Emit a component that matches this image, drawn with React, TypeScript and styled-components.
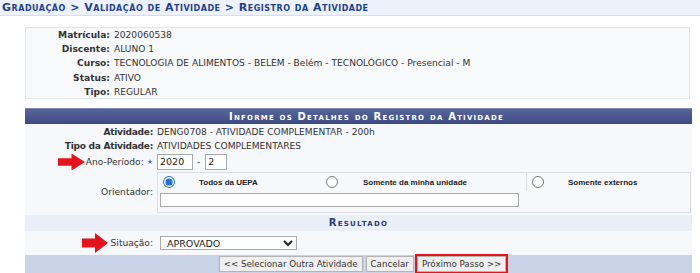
import styled, { createGlobalStyle } from "styled-components";

const GlobalStyle = createGlobalStyle`
  body {
    margin: 0;
    background: #ffffff;
    font-family: "DejaVu Sans", Verdana, sans-serif;
    font-size: 9.1px;
    color: #333;
  }
  * { box-sizing: border-box; }
`;

const Arrow = ({ width, height }: { width: number; height: number }) => (
  <svg width={width} height={height} viewBox="0 0 28 18" preserveAspectRatio="none">
    <path d="M0 5 H14 V0 L28 9 L14 18 V13 H0 Z" fill="#e3141c" />
  </svg>
);

const App = () => {
  return (
    <>
      <GlobalStyle />
      <Breadcrumb>Graduação &gt; Validação de Atividade &gt; Registro da Atividade</Breadcrumb>
      <Page>
        <InfoBox>
          <InfoLabel>Matrícula:</InfoLabel>
          <InfoValue>2020060538</InfoValue>
          <InfoLabel>Discente:</InfoLabel>
          <InfoValue>ALUNO 1</InfoValue>
          <InfoLabel>Curso:</InfoLabel>
          <InfoValue>TECNOLOGIA DE ALIMENTOS - BELEM - Belém - TECNOLÓGICO - Presencial - M</InfoValue>
          <InfoLabel>Status:</InfoLabel>
          <InfoValue>ATIVO</InfoValue>
          <InfoLabel>Tipo:</InfoLabel>
          <InfoValue>REGULAR</InfoValue>
        </InfoBox>

        <FormTable>
          <Caption>Informe os Detalhes do Registro da Atividade</Caption>
          <FormBody>
            <Label $bold $h={14}>Atividade:</Label>
            <Value>DENG0708 - ATIVIDADE COMPLEMENTAR - 200h</Value>
            <Label $bold $h={14}>Tipo da Atividade:</Label>
            <Value>ATIVIDADES COMPLEMENTARES</Value>
            <Label $h={17}>
              <ArrowSlot $left={33}>
                <Arrow width={27} height={17} />
              </ArrowSlot>
              Ano-Período:<Star>★</Star>
            </Label>
            <Value>
              <TextInput $width={36} defaultValue="2020" />
              <Dash>-</Dash>
              <TextInput $width={22} defaultValue="2" />
            </Value>
            <Label>Orientador:</Label>
            <OrientadorBox>
              <OptionRow>
                <Option $width={163}>
                  <Radio type="radio" name="orient" defaultChecked />
                  <OptionText $gap={24}>Todos da UEPA</OptionText>
                </Option>
                <Option $width={205}>
                  <Radio type="radio" name="orient" />
                  <OptionText $gap={25}>Somente da minha unidade</OptionText>
                </Option>
                <Option $width={164} $divider>
                  <Radio type="radio" name="orient" />
                  <OptionText $gap={24}>Somente externos</OptionText>
                </Option>
              </OptionRow>
              <SearchInput />
            </OrientadorBox>
          </FormBody>
          <SubCaption>Resultado</SubCaption>
          <ResultBody>
            <Label $h={24}>
              <ArrowSlot $left={57}>
                <Arrow width={26} height={20} />
              </ArrowSlot>
              Situação:
            </Label>
            <Value $indent>
              <Select defaultValue="APROVADO">
                <option>APROVADO</option>
                <option>REPROVADO</option>
              </Select>
            </Value>
          </ResultBody>
          <Footer>
            <Button>&lt;&lt; Selecionar Outra Atividade</Button>
            <Button>Cancelar</Button>
            <Button $highlight>Próximo Passo &gt;&gt;</Button>
          </Footer>
        </FormTable>
      </Page>
    </>
  );
};

const Breadcrumb = styled.h2`
  margin: 0;
  height: 16px;
  padding: 1px 0 0 2px;
  background: #edf1f9;
  border-bottom: 1px solid #d5def0;
  color: #1f3f8f;
  font-size: 11px;
  font-weight: bold;
  font-variant: small-caps;
  letter-spacing: 0.5px;
  line-height: 13px;
`;

const Page = styled.div`
  padding: 11px 8px 0 25px;
`;

const InfoBox = styled.div`
  display: grid;
  grid-template-columns: 84px 1fr;
  column-gap: 4px;
  width: 665px;
  height: 72px;
  background: #f8f9fb;
  border: 1px solid #e2e4ea;
  line-height: 14.2px;
`;

const InfoLabel = styled.div`
  text-align: right;
  font-weight: bold;
  color: #333;
`;

const InfoValue = styled.div`
  color: #333;
`;

const FormTable = styled.div`
  margin-top: 9px;
  width: 667px;
  background: #f7f8fb;
`;

const Caption = styled.div`
  height: 16px;
  padding-left: 16px;
  background: linear-gradient(#58659c, #3e4b81);
  border-top: 1px solid #7c87b0;
  color: #ffffff;
  text-align: center;
  font-weight: bold;
  font-variant: small-caps;
  letter-spacing: 1.2px;
  font-size: 10px;
  line-height: 15px;
`;

const FormBody = styled.div`
  display: grid;
  grid-template-columns: 128px 1fr;
  column-gap: 4px;
  align-items: center;
  padding: 1px 0 1px;
`;

const ResultBody = styled(FormBody)`
  padding: 0;
`;

const Label = styled.div<{ $bold?: boolean; $h?: number }>`
  position: relative;
  display: flex;
  align-items: center;
  justify-content: flex-end;
  height: ${(p) => (p.$h ? `${p.$h}px` : "auto")};
  font-weight: ${(p) => (p.$bold ? "bold" : "normal")};
  letter-spacing: ${(p) => (p.$bold ? "-0.3px" : "0")};
  color: #333;
  white-space: nowrap;
`;

const ArrowSlot = styled.span<{ $left: number }>`
  position: absolute;
  left: ${(p) => p.$left}px;
  top: 50%;
  transform: translateY(-50%);
  line-height: 0;
`;

const Star = styled.span`
  color: #4a74c9;
  font-size: 7px;
  margin-left: 3px;
`;

const Value = styled.div<{ $indent?: boolean }>`
  display: flex;
  align-items: center;
  padding-left: ${(p) => (p.$indent ? "3px" : "0")};
  color: #333;
`;

const TextInput = styled.input<{ $width: number }>`
  width: ${(p) => p.$width}px;
  height: 16px;
  padding: 0 2px;
  border: 1px solid #a9a9a9;
  background: #fff;
  font-family: "DejaVu Sans", Verdana, sans-serif;
  font-size: 9.5px;
  color: #222;
`;

const Dash = styled.span`
  margin: 0 5px 0 4px;
`;

const OrientadorBox = styled.div`
  height: 41px;
  margin: 2px 2px 1px 0;
  border: 1px solid #dcdde2;
  padding: 0 0 0 2px;
`;

const OptionRow = styled.div`
  display: flex;
  height: 18px;
  align-items: center;
  margin-left: -2px;
`;

const Option = styled.div<{ $width: number; $divider?: boolean }>`
  display: flex;
  align-items: center;
  width: ${(p) => p.$width}px;
  height: 100%;
  padding-left: 5px;
  border-left: ${(p) => (p.$divider ? "1px solid #dcdde2" : "none")};
`;

const Radio = styled.input`
  margin: 0;
  width: 12px;
  height: 12px;
  accent-color: #1a73e8;
`;

const OptionText = styled.span<{ $gap: number }>`
  margin-left: ${(p) => p.$gap}px;
  font-family: "Liberation Sans", Arial, sans-serif;
  font-weight: bold;
  font-size: 8px;
  color: #222;
`;

const SearchInput = styled.input`
  display: block;
  width: 359px;
  height: 14px;
  margin-top: 2px;
  border: 1px solid #a9a9a9;
  background: #fff;
`;

const SubCaption = styled.div`
  height: 16px;
  background: #eaeef6;
  color: #2d3a6e;
  text-align: center;
  font-weight: bold;
  font-variant: small-caps;
  letter-spacing: 1.3px;
  font-size: 10px;
  line-height: 16px;
`;

const Select = styled.select`
  width: 137px;
  height: 14px;
  padding: 0 2px;
  border: 1px solid #a9a9a9;
  border-radius: 0;
  background: #fff;
  font-family: "DejaVu Sans", Verdana, sans-serif;
  font-size: 9.5px;
  color: #222;
`;

const Footer = styled.div`
  display: flex;
  justify-content: center;
  gap: 3px;
  height: 19px;
  padding-top: 1px;
  padding-left: 8px;
  background: #c8d3e8;
`;

const Button = styled.button<{ $highlight?: boolean }>`
  height: 16px;
  padding: 0 4px;
  border: 1px solid #b4b4b4;
  outline: ${(p) => (p.$highlight ? "2px solid #e3141c" : "none")};
  outline-offset: 0;
  background: #efefef;
  font-family: "DejaVu Sans", Verdana, sans-serif;
  font-size: 8.7px;
  color: #333;
  line-height: 14px;
`;

export default App;
